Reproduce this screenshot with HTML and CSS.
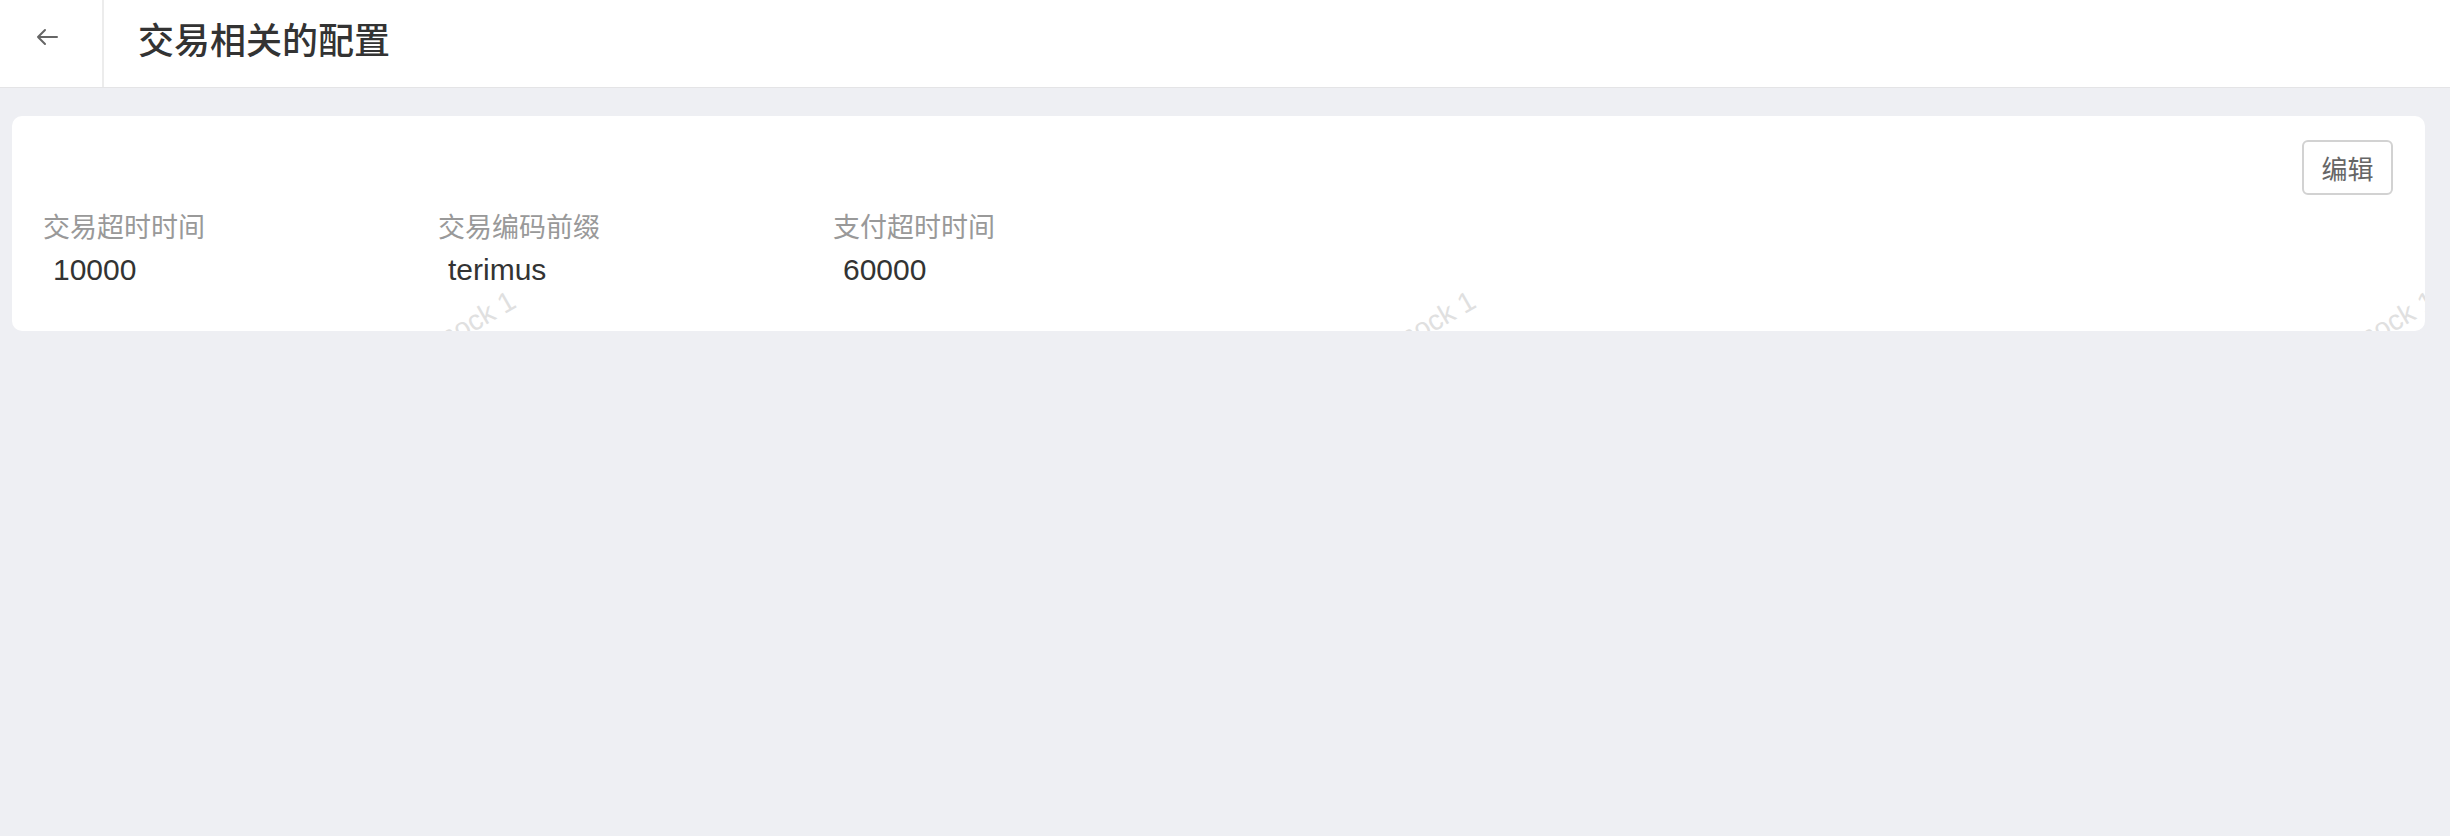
FILE: index.html
```html
<!DOCTYPE html>
<html lang="zh-CN">
<head>
    <meta charset="UTF-8">
    <meta name="viewport" content="width=device-width, initial-scale=1.0">
    <title>交易相关的配置</title>
    <link rel="stylesheet" href="styles.css">
</head>

<body>

    <div class="header">
        <div class="back">
            <svg width="24" height="18" viewBox="0 0 24 18">
                <path d="M22 9H3M10 2L3 9L10 16" fill="none" stroke="#666" stroke-width="2" stroke-linecap="round" stroke-linejoin="round"/>
            </svg>
        </div>
        <h1 class="title">交易相关的配置</h1>
    </div>

    <div class="card">
        <span class="watermark" style="left: 430px">mock 1</span>
        <span class="watermark" style="left: 1390px">mock 1</span>
        <span class="watermark" style="left: 2350px">mock 1</span>

        <div class="toolbar">
            <button class="edit-button">编辑</button>
        </div>

        <div class="fields">
            <div class="field">
                <div class="label">交易超时时间</div>
                <div class="value">10000</div>
            </div>
            <div class="field">
                <div class="label">交易编码前缀</div>
                <div class="value">terimus</div>
            </div>
            <div class="field">
                <div class="label">支付超时时间</div>
                <div class="value">60000</div>
            </div>
        </div>
    </div>

</body>
</html>
```

FILE: styles.css
```css
body{
    margin: 0;
    font-family: "Liberation Sans", "Noto Sans CJK SC", sans-serif;
    background-color: #eeeff3;
    height: 100vh;
}
.header{
    display: flex;
    align-items: center;
    height: 87px;
    background-color: #fff;
    border-bottom: 1px solid #e4e4e6;
}
.back{
    width: 104px;
    height: 100%;
    border-right: 2px solid #ececec;
    display: flex;
    align-items: center;
    padding: 0 0 14px 35px;
    box-sizing: border-box;
}
.title{
    margin: 0 0 12px 34px;
    font-family: "Noto Sans CJK SC", sans-serif;
    font-size: 36px;
    font-weight: 500;
    color: #333;
}
.card{
    position: relative;
    overflow: hidden;
    margin: 28px 25px 0 12px;
    height: 215px;
    box-sizing: border-box;
    padding: 24px 32px 0 31px;
    background-color: #fff;
    border-radius: 10px;
}
.watermark{
    position: absolute;
    top: 212px;
    font-size: 28px;
    line-height: 28px;
    color: #e0e0e0;
    white-space: nowrap;
    transform: rotate(-30deg);
    transform-origin: 0 100%;
}
.toolbar{
    display: flex;
    justify-content: flex-end;
}
.edit-button{
    width: 91px;
    height: 55px;
    padding: 0;
    font-family: "Noto Sans CJK SC", sans-serif;
    font-size: 26px;
    color: #666;
    background-color: #fff;
    border: 2px solid #d2d2d2;
    border-radius: 6px;
}
.fields{
    display: grid;
    grid-template-columns: repeat(3, 395px);
    margin-top: 11px;
}
.label{
    font-family: "Noto Sans CJK SC", sans-serif;
    font-size: 27px;
    line-height: 40px;
    color: #999;
}
.value{
    padding-left: 10px;
    font-size: 30px;
    line-height: 47px;
    color: #333;
}
```
